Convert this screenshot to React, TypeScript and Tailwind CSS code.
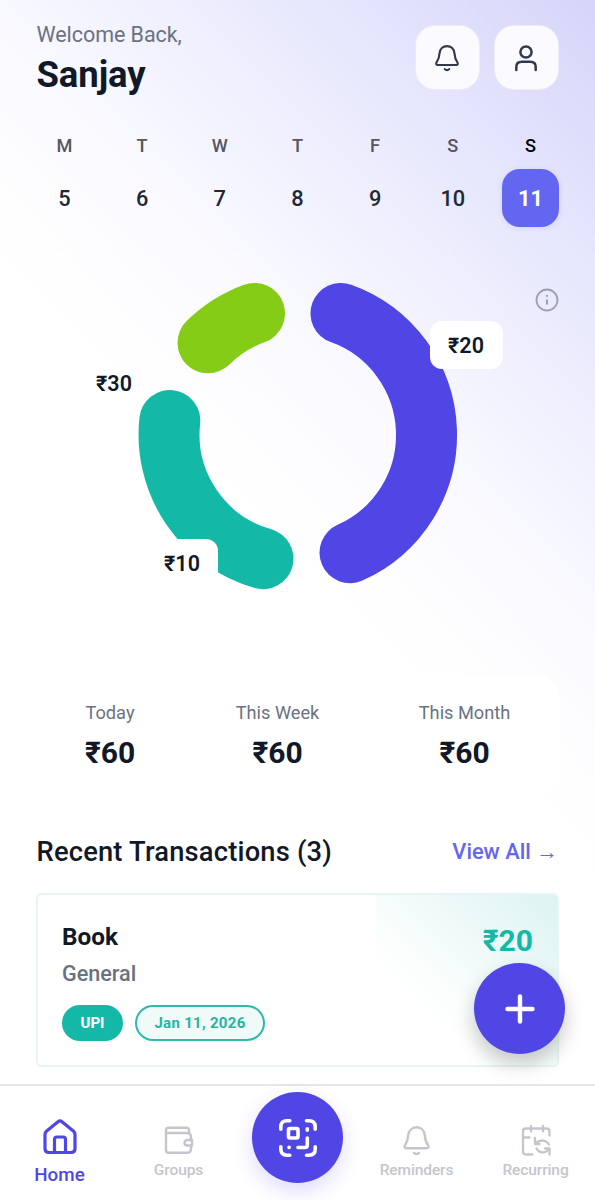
import type { ReactNode } from 'react';

const days = [
  { label: 'M', date: 5 },
  { label: 'T', date: 6 },
  { label: 'W', date: 7 },
  { label: 'T', date: 8 },
  { label: 'F', date: 9 },
  { label: 'S', date: 10 },
  { label: 'S', date: 11, active: true },
];

const totals = [
  { label: 'Today', amount: '₹60', width: 'w-[148px]' },
  { label: 'This Week', amount: '₹60', width: 'w-[187px]' },
  { label: 'This Month', amount: '₹60', width: 'w-[187px]' },
];

function BellIcon({ className }: { className: string }) {
  return (
    <svg viewBox="0 0 28 30" className={className} fill="none" stroke="currentColor" strokeLinecap="round" strokeLinejoin="round">
      <path d="M14 2.200c-4.400 0-7.600 3.200-8 7.600-.3 4.200-.6 6.200-3 9.500-1.200 1.700-.7 3.200 1.200 3.200h19.600c1.900 0 2.400-1.500 1.200-3.200-2.400-3.300-2.700-5.300-3-9.500-.4-4.400-3.600-7.600-8-7.600Z" />
      <path d="M11.600 27c1.400 1.500 3.400 1.500 4.800 0" />
    </svg>
  );
}

function HomeIcon() {
  return (
    <svg viewBox="0 0 36 36" className="h-9 w-9" fill="none" stroke="currentColor" strokeWidth="3.200" strokeLinecap="round" strokeLinejoin="round">
      <path d="M3 15.500c0-1.400.6-2.500 1.700-3.400L16 2.800c1.200-1 2.800-1 4 0l11.300 9.300c1.100.9 1.700 2 1.700 3.400V29.500c0 2.800-1.200 4-4 4H7c-2.800 0-4-1.200-4-4Z" />
      <path d="M12.500 33.500V20.500c0-1.700.8-2.500 2.500-2.500h6c1.700 0 2.500.8 2.500 2.500v13" />
    </svg>
  );
}

function WalletIcon() {
  return (
    <svg viewBox="0 0 30 30" className="h-[30px] w-[30px]" fill="none" stroke="currentColor" strokeWidth="2.400" strokeLinecap="round" strokeLinejoin="round">
      <path d="M25 8V5.200c0-1.700-.8-2.500-2.500-2.500H4.500C2.800 2.700 2 3.500 2 5.200v20c0 1.700.8 2.500 2.500 2.500H23c3 0 4-1 4-4V21" />
      <path d="M2.200 8H23c3 0 4 1 4 4v2.700" />
      <path d="M23.500 15h4.500v5.500h-4.500c-1.900 0-3-1.100-3-2.700s1.100-2.800 3-2.800Z" />
    </svg>
  );
}

function ScanIcon() {
  return (
    <svg viewBox="0 0 38 38" className="h-[38px] w-[38px]" fill="none" stroke="currentColor" strokeWidth="3.600" strokeLinecap="round" strokeLinejoin="round">
      <path d="M1.800 10.300V8c0-4.300 2-6.200 6.200-6.200h2.800M27.500 1.800H30c4.300 0 6.200 2 6.200 6.200v2.300M36.200 27.700V30c0 4.300-2 6.200-6.200 6.200h-2.500M10.800 36.200H8c-4.300 0-6.200-2-6.200-6.200v-2.300" />
      <rect x="9.500" y="9.500" width="9.500" height="9.500" rx="1.500" />
      <path d="M28.300 9.700v1.600M28.300 19v7c0 1.800-.7 2.500-2.500 2.500H19M10 28.400h.2" />
    </svg>
  );
}

function RecurringIcon() {
  return (
    <svg viewBox="0 0 30 32" className="h-8 w-[30px]" fill="none" stroke="currentColor" strokeWidth="2.300" strokeLinecap="round" strokeLinejoin="round">
      <path d="M10 1.800v5.700M22 1.800v5.700M11.500 30.500H5c-2 0-3-1-3-3V7.500c0-2 1-3 3-3h20.500c2 0 3 1 3 3v4M2 13.500h6.500" />
      <path d="M28 20.500c-2.500-4.500-8.500-5.500-13-1.500M14 14v6h4.500" />
      <path d="M15.500 24.500c2.300 4.500 8.200 5.300 12 1.500M28.500 30.500v-6H24" />
    </svg>
  );
}

function IconButton({ children }: { children: ReactNode }) {
  return (
    <button className="flex h-[65px] w-[65px] items-center justify-center rounded-[20px] border border-[#ececf5] bg-[#fafaff] text-[#33384a]">
      {children}
    </button>
  );
}

function SpendingChart() {
  return (
    <div className="relative h-[320px] w-full">
      <svg viewBox="0 0 522 320" className="ml-[0.750px] h-[320px] w-[522px]" fill="none" strokeWidth="61" strokeLinecap="round">
        <path d="M304 38.400A129 129 0 0 1 313 277.700" stroke="#4f46e5" />
        <path d="M226 283.700A129 129 0 0 1 132.800 145.500" stroke="#14b8a6" />
        <path d="M171 67.800A129 129 0 0 1 217.500 38.400" stroke="#84cc16" />
      </svg>
      <span className="absolute top-[46px] left-[393.500px] flex h-12 w-[73px] items-center justify-center rounded-xl bg-white pt-0.5">₹20</span>
      <span className="absolute top-[84px] left-[60px] flex h-12 w-[36px] items-center justify-center pt-0.5">₹30</span>
      <span className="absolute top-[264px] left-[110px] flex h-12 w-[72px] items-center justify-center rounded-xl bg-white pt-0.5">₹10</span>
      <svg viewBox="0 0 24 24" className="absolute top-[13px] right-0 h-6 w-6 text-[#9ca0b0]" fill="none" stroke="currentColor" strokeWidth="1.800">
        <circle cx="12" cy="12" r="10.500" />
        <path d="M12 11.500v5M12 7v1.800" strokeWidth="2" />
      </svg>
    </div>
  );
}

function NavItem({ label, children }: { label: string; children: ReactNode }) {
  return (
    <a className="flex flex-col items-center pt-[38px] text-[#c3c6cd]">
      <div className="flex h-8 items-center">{children}</div>
      <span className="mt-1 text-[15.500px] leading-5 font-medium tracking-[-0.100px] whitespace-nowrap">{label}</span>
    </a>
  );
}

export default function App() {
  return (
    <div className="relative flex h-[1200px] w-[595px] flex-col overflow-hidden bg-[linear-gradient(225deg,#d5d5fa_0px,#e6e6fd_190px,#efeffe_300px,#f8f8ff_420px,#fdfdff_530px,#ffffff_630px)] font-[Roboto,'Liberation_Sans',sans-serif] text-[#111827]">
      <main className="flex-1 px-9 pt-[25px]">
        <header className="flex h-[65px] justify-between">
          <div className="pl-[0.500px]">
            <p className="mt-[-4px] text-[21.500px] leading-7 tracking-[-0.050px] text-gray-500">Welcome Back,</p>
            <h1 className="mt-[5px] text-[36.500px] leading-[42px] font-bold tracking-[-0.100px]">Sanjay</h1>
          </div>
          <div className="flex gap-[14px] pr-[0.500px]">
            <IconButton>
              <BellIcon className="h-7 w-[26px] stroke-[2.300]" />
            </IconButton>
            <IconButton>
              <svg viewBox="0 0 24 28" className="h-7 w-6" fill="none" stroke="currentColor" strokeWidth="2.500" strokeLinecap="round">
                <circle cx="12" cy="8" r="5.600" />
                <path d="M2.300 26v-3c0-3.500 2-5.200 5.500-5.200h8.400c3.500 0 5.500 1.700 5.500 5.200v3" />
              </svg>
            </IconButton>
          </div>
        </header>

        <div className="mt-[44px] flex justify-between">
          {days.map((day, index) => (
            <div key={index} className="flex w-[57px] flex-col items-center">
              <span className={day.active ? 'text-[18.200px] leading-6 font-medium text-black' : 'text-[18.200px] leading-6 font-medium text-[#55565e]'}>
                {day.label}
              </span>
              <span
                className={
                  day.active
                    ? 'mt-[11px] flex h-[58px] w-[57px] items-center justify-center rounded-[18px] bg-[#6366f1] pt-0.5 text-[21.800px] font-bold text-white shadow-[0_1px_6px_#6366f122]'
                    : 'mt-[11px] flex h-[58px] w-[57px] items-center justify-center pt-0.5 text-[21.800px] font-medium text-[#1f2937]'
                }
              >
                {day.date}
              </span>
            </div>
          ))}
        </div>

        <section className="mt-[48px] text-[21.500px] font-semibold">
          <SpendingChart />
        </section>

        <section className="mt-[80px] flex h-[121px] rounded-3xl bg-white pt-[26px]">
          {totals.map((total) => (
            <div key={total.label} className={`flex flex-col items-center ${total.width}`}>
              <span className="text-[18.200px] leading-6 text-gray-500">{total.label}</span>
              <span className="mt-[10px] text-[30px] leading-9 font-bold">{total.amount}</span>
            </div>
          ))}
        </section>

        <div className="mt-[38px] flex h-9 items-center justify-between pr-px pl-[0.500px]">
          <h2 className="text-[27.300px] font-medium tracking-[0.200px]">Recent Transactions (3)</h2>
          <a className="text-[21.800px] font-medium text-[#6366f1]">View All →</a>
        </div>

        <article className="mt-[23px] flex h-[174px] overflow-hidden rounded-md border-2 border-[#e6f6f4] bg-white">
          <div className="w-[338px] shrink-0 pt-[27px] pl-6">
            <h3 className="text-[24.300px] leading-[30px] font-bold">Book</h3>
            <p className="mt-2 text-[21.600px] leading-7 font-medium text-gray-500">General</p>
            <div className="mt-[17px] flex gap-3 text-[15px] font-bold">
              <span className="flex h-9 w-[61px] items-center justify-center rounded-full bg-[#14b8a6] text-white">UPI</span>
              <span className="flex h-9 w-[130px] items-center justify-center rounded-full border-2 border-[#2fb9a6] bg-[#f0fbf9] tracking-[0.300px] text-[#25b5a0]">
                Jan 11, 2026
              </span>
            </div>
          </div>
          <div className="flex-1 bg-[linear-gradient(225deg,#dcf4f1_0%,#edf9f8_33%,#fafefd_58%,#ffffff_72%)] pt-[28px] pr-6 text-right text-[30px] leading-9 font-bold text-[#14b8a6]">
            ₹20
          </div>
        </article>
      </main>

      <button className="absolute top-[963px] left-[474px] flex h-[91px] w-[91px] items-center justify-center rounded-full bg-[#4f46e5] text-white shadow-[0_10px_20px_#00000038]">
        <svg viewBox="0 0 30 30" className="h-[30px] w-[30px]" stroke="currentColor" strokeWidth="4.400" strokeLinecap="round">
          <path d="M15 2.500v25M2.500 15h25" />
        </svg>
      </button>

      <nav className="relative grid h-[116px] shrink-0 grid-cols-5 border-t-2 border-[#e5e7eb] bg-white">
        <a className="flex flex-col items-center pt-[33px] text-[#4f46e5]">
          <HomeIcon />
          <span className="mt-2 text-[18.800px] leading-6 font-medium">Home</span>
        </a>
        <NavItem label="Groups">
          <WalletIcon />
        </NavItem>
        <a className="flex justify-center">
          <span className="mt-[6px] flex h-[91px] w-[91px] items-center justify-center rounded-full bg-[#4f46e5] text-white shadow-[0_8px_20px_#4f46e530]">
            <ScanIcon />
          </span>
        </a>
        <NavItem label="Reminders">
          <BellIcon className="h-[31px] w-[29px] stroke-[2.300]" />
        </NavItem>
        <NavItem label="Recurring">
          <RecurringIcon />
        </NavItem>
      </nav>
    </div>
  );
}
